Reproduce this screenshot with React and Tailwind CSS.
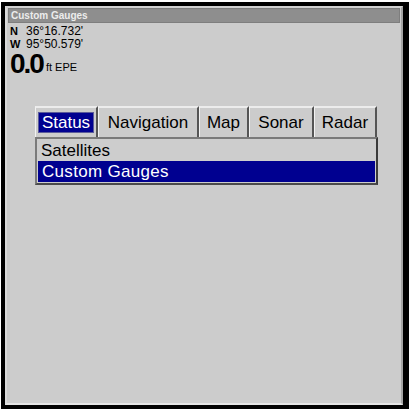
export default function App() {
  const tabs = ["Status", "Navigation", "Map", "Sonar", "Radar"];
  const tabWidths = ["w-[63px]", "w-[101px]", "w-[50px]", "w-[65px]", "w-[63px]"];

  return (
    <div className="w-[409px] h-[409px] bg-white pt-[2px] pl-[1px] flex" style={{ fontFamily: '"Liberation Sans", Arial, sans-serif' }}>
      <div className="w-[408px] h-[407px] border-l-[4px] border-t-[4px] border-b-[4px] border-r-[6px] border-black bg-[#cccccc]">
        <div className="h-full flex flex-col border-l-[2px] border-l-[#dadada] border-t-[2px] border-t-[#d2d2d2] border-r-[2px] border-r-[#a4a4a4] border-b-[2px] border-b-[#e4e4e4]">
          {/* title bar */}
          <div className="h-[15px] mx-[1px] bg-[#8e8e8e] border border-[#7e7e7e] flex items-center pl-[2px]">
            <span className="text-[10px] font-bold leading-none text-[#ececec]">Custom Gauges</span>
          </div>

          {/* position */}
          <div className="pl-[3px] pt-[1px] text-black">
            <div className="flex items-center h-[14px] text-[12px] leading-none">
              <span className="w-[16px] text-[11px] font-bold">N</span>
              <span>36°16.732'</span>
            </div>
            <div className="flex items-center h-[12px] text-[12px] leading-none">
              <span className="w-[16px] text-[11px] font-bold">W</span>
              <span>95°50.579'</span>
            </div>
            <div className="flex items-end h-[24px]">
              <span className="text-[28px] font-bold leading-[20px] tracking-[-2px]">0.0</span>
              <span className="text-[11px] leading-none pb-[1px] pl-[3px]">ft EPE</span>
            </div>
          </div>

          {/* menu */}
          <div className="ml-[28px] mt-[32px] w-[343px] flex flex-col">
            <div className="flex h-[31px]">
              {tabs.map((t, i) => (
                <div
                  key={t}
                  className={`${tabWidths[i]} h-full flex items-center justify-center border-t-[2px] border-t-[#ececec] border-l-[1px] border-l-[#f2f2f2] border-r-[2px] border-r-[#555555] text-[17px] text-black leading-none`}
                >
                  {i === 0 ? (
                    <span className="bg-[#000090] text-white px-[3px] h-[21px] flex items-center border border-[#5a5a9a]">{t}</span>
                  ) : (
                    <span>{t}</span>
                  )}
                </div>
              ))}
            </div>
            <div className="h-[48px] border-t-[2px] border-t-[#7a7a7a] border-l-[2px] border-l-[#7a7a7a] border-r-[2px] border-r-[#3a3a3a] border-b-[2px] border-b-[#4a4a4a] bg-[#cdcdcd] p-[1px] flex flex-col">
              <div className="h-[21px] flex items-center pl-[3px] text-[17px] text-black leading-none">Satellites</div>
              <div className="h-[21px] flex items-center pl-[4px] bg-[#000090] text-[17px] text-white leading-none tracking-[0.3px]">Custom Gauges</div>
            </div>
          </div>
        </div>
      </div>
    </div>
  );
}
